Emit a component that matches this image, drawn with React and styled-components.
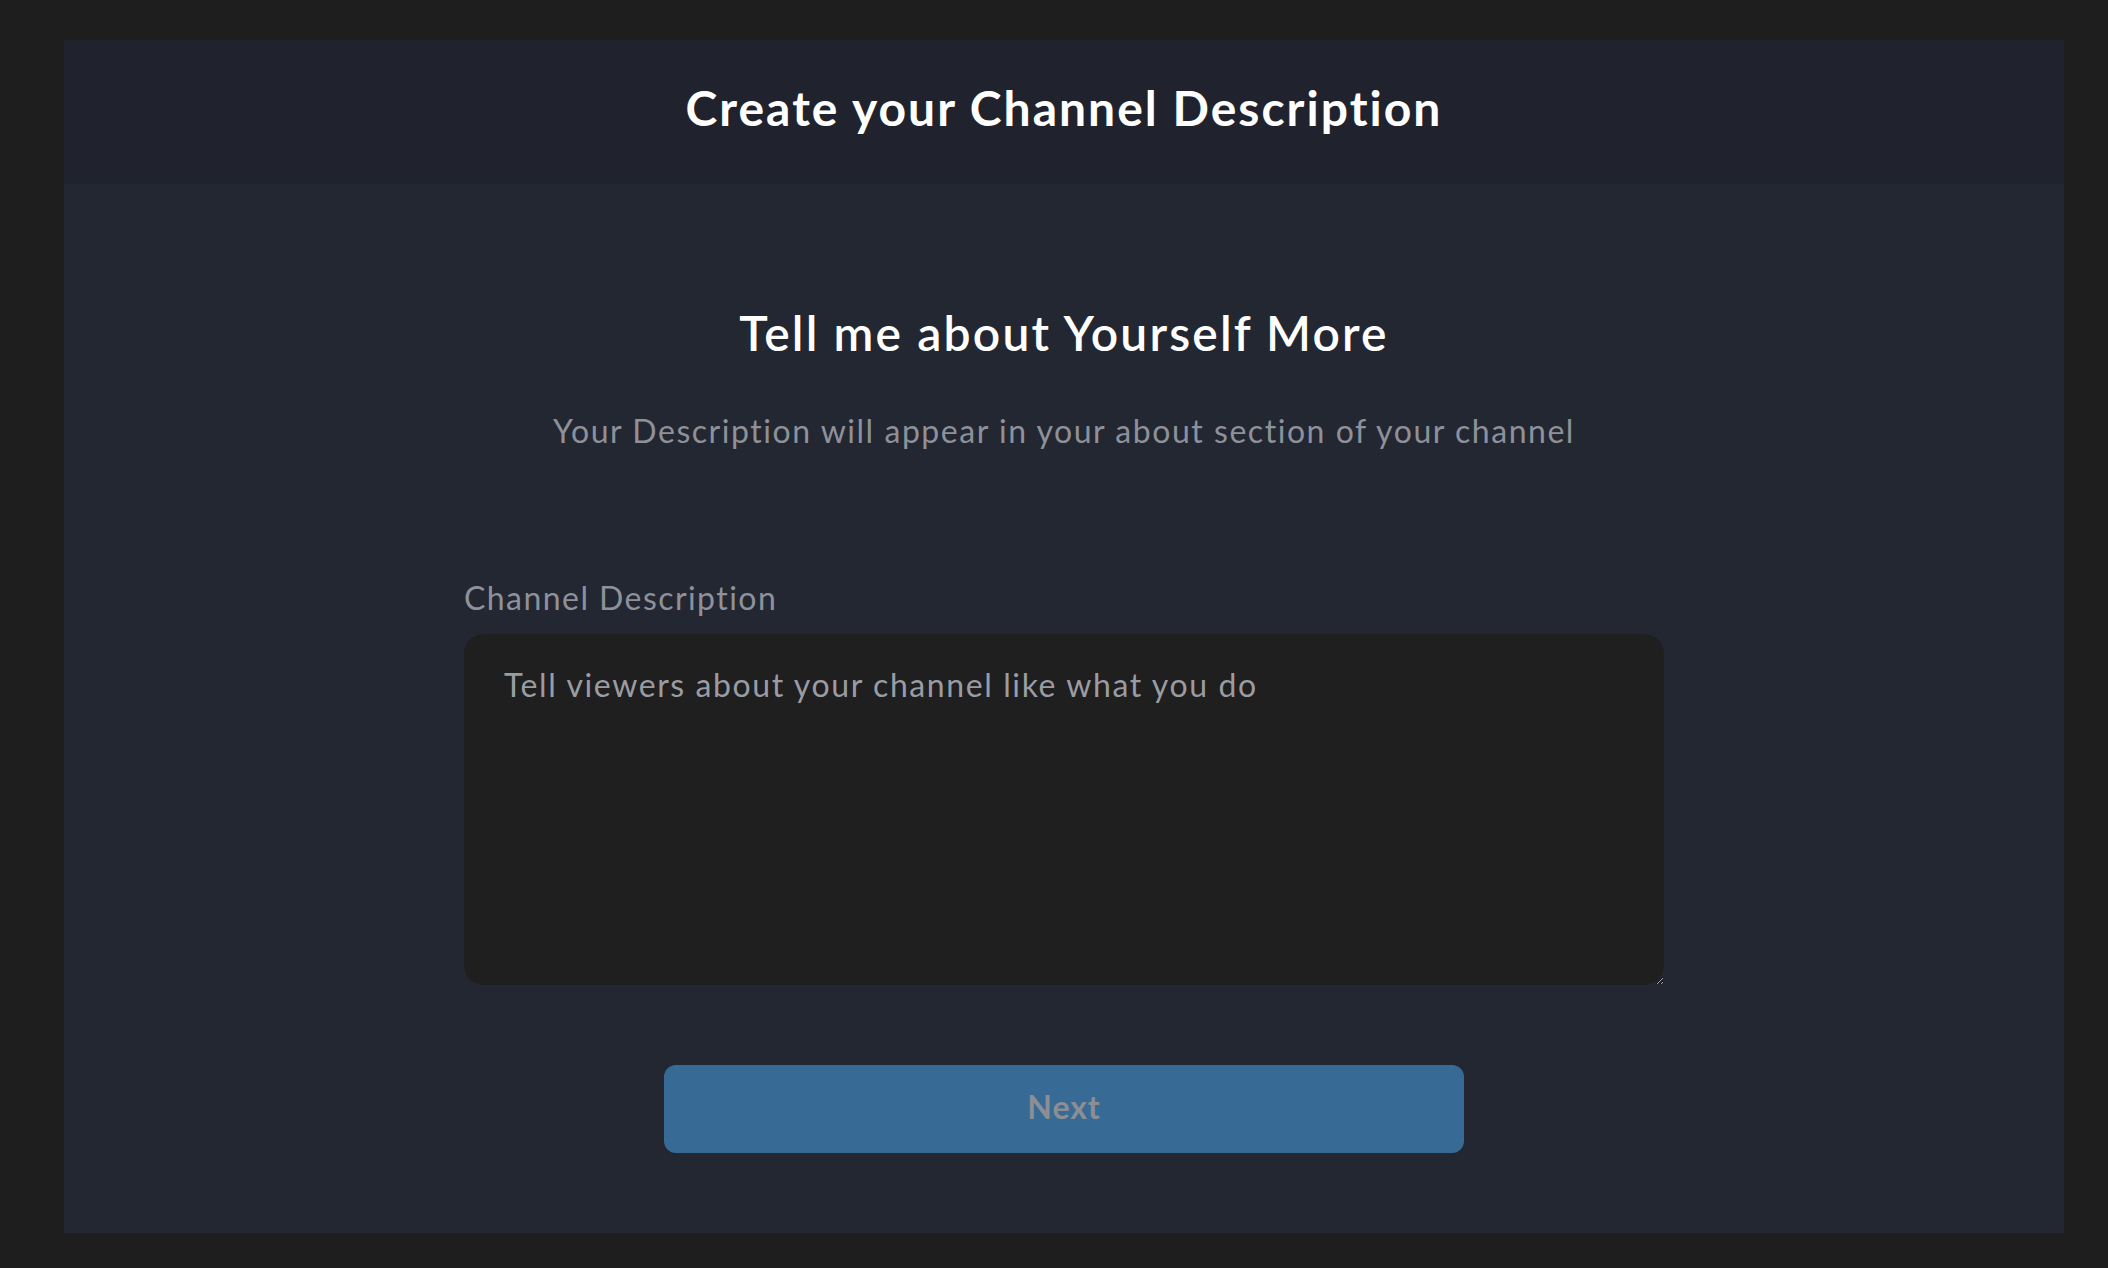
import React from "react";
import styled, { createGlobalStyle } from "styled-components";

const GlobalStyle = createGlobalStyle`
  html, body {
    margin: 0;
    padding: 0;
    background: #1e1e1e;
    font-family: Lato, "Open Sans", "Noto Sans", sans-serif;
  }
  * { box-sizing: border-box; }
`;

const Page = styled.div`
  padding: 40px 0 36px 64px;
`;

const Card = styled.main`
  width: 2000px;
  background: #232732;
  display: flex;
  flex-direction: column;
`;

const Header = styled.header`
  height: 144px;
  padding-bottom: 8px;
  background: #20232d;
  display: flex;
  align-items: center;
  justify-content: center;
`;

const Title = styled.h1`
  margin: 0;
  font-size: 48px;
  line-height: 1.2;
  font-weight: 700;
  letter-spacing: 0.042em;
  color: #ffffff;
`;

const Body = styled.section`
  display: flex;
  flex-direction: column;
  align-items: center;
  padding: 120px 0 80px;
`;

const Heading = styled.h2`
  margin: 0;
  font-size: 48px;
  line-height: 1.2;
  font-weight: 600;
  letter-spacing: 0.045em;
  color: #ffffff;
`;

const Lead = styled.p`
  margin: 50px 0 0;
  font-size: 32px;
  line-height: 1.2;
  letter-spacing: 0.048em;
  color: #8e9199;
`;

const Field = styled.div`
  width: 1200px;
  margin-top: 129px;
  display: flex;
  flex-direction: column;
  gap: 17px;
`;

const Label = styled.label`
  font-size: 32px;
  line-height: 1.2;
  letter-spacing: 0.045em;
  color: #8e9199;
`;

const TextArea = styled.textarea`
  width: 1200px;
  height: 351px;
  background: #1f1f1f;
  border: none;
  border-radius: 20px;
  padding: 32px 40px;
  font-family: inherit;
  font-size: 32px;
  line-height: 1.2;
  letter-spacing: 0.05em;
  color: #e6e6e6;
  outline: none;
  &::placeholder {
    color: #9a9ca3;
  }
`;

const Button = styled.button`
  margin-top: 80px;
  width: 800px;
  height: 88px;
  padding: 0 0 5px;
  border: none;
  border-radius: 12px;
  background: #386a96;
  color: #8b8e94;
  font-family: inherit;
  font-size: 32px;
  font-weight: 700;
  letter-spacing: 0.03em;
`;

export default function App() {
  return (
    <>
      <GlobalStyle />
      <Page>
        <Card>
          <Header>
            <Title>Create your Channel Description</Title>
          </Header>
          <Body>
            <Heading>Tell me about Yourself More</Heading>
            <Lead>Your Description will appear in your about section of your channel</Lead>
            <Field>
              <Label htmlFor="desc">Channel Description</Label>
              <TextArea id="desc" placeholder="Tell viewers about your channel like what you do" />
            </Field>
            <Button disabled>Next</Button>
          </Body>
        </Card>
      </Page>
    </>
  );
}
